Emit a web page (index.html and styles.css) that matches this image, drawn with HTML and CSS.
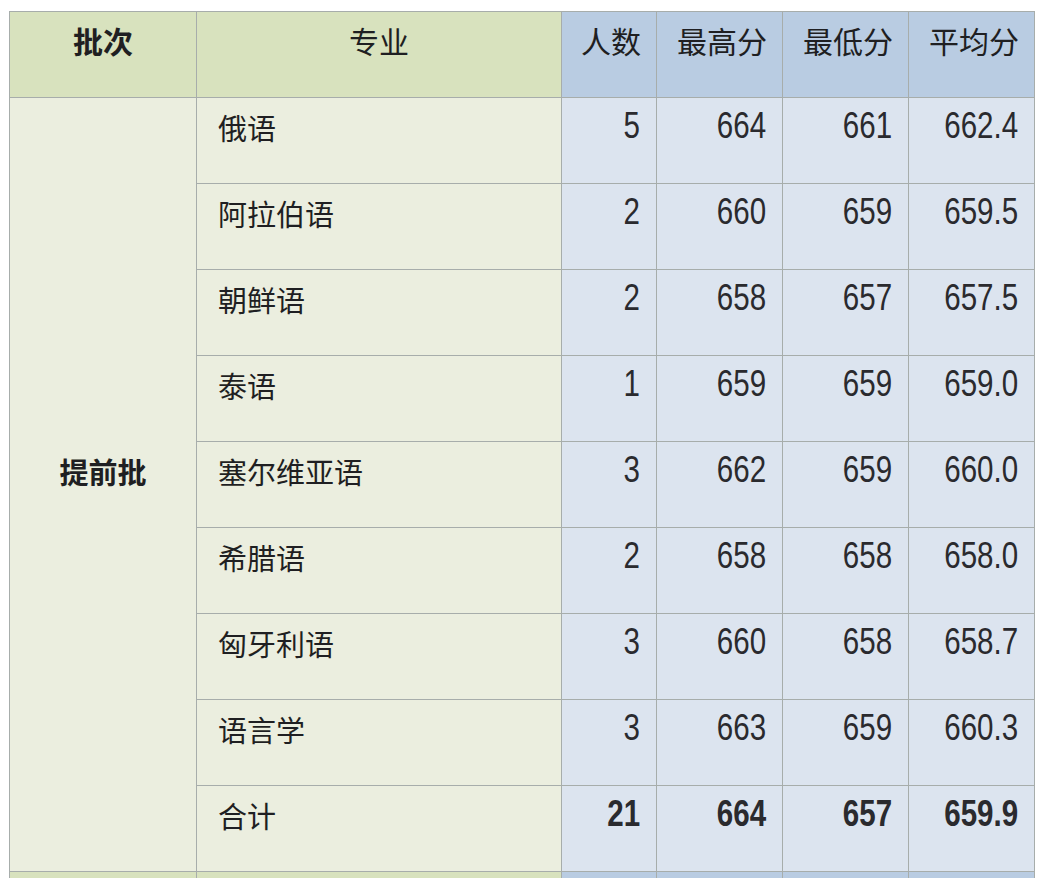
FILE: index.html
```html
<!DOCTYPE html>
<html lang="zh-CN">
<head>
<meta charset="utf-8">
<title>提前批录取分数</title>
<link rel="stylesheet" href="styles.css">
</head>
<body>
<div class="sheet" role="table">
  <div class="cell hg center bold" role="columnheader">批次</div>
  <div class="cell hg center" role="columnheader">专业</div>
  <div class="cell hb num-h" role="columnheader">人数</div>
  <div class="cell hb num-h" role="columnheader">最高分</div>
  <div class="cell hb num-h" role="columnheader">最低分</div>
  <div class="cell hb num-h" role="columnheader">平均分</div>

  <div class="cell bg batch bold" role="rowheader">提前批</div>

  <div class="cell bg name">俄语</div>
  <div class="cell bb num"><span>5</span></div><div class="cell bb num"><span>664</span></div><div class="cell bb num"><span>661</span></div><div class="cell bb num"><span>662.4</span></div>

  <div class="cell bg name">阿拉伯语</div>
  <div class="cell bb num"><span>2</span></div><div class="cell bb num"><span>660</span></div><div class="cell bb num"><span>659</span></div><div class="cell bb num"><span>659.5</span></div>

  <div class="cell bg name">朝鲜语</div>
  <div class="cell bb num"><span>2</span></div><div class="cell bb num"><span>658</span></div><div class="cell bb num"><span>657</span></div><div class="cell bb num"><span>657.5</span></div>

  <div class="cell bg name">泰语</div>
  <div class="cell bb num"><span>1</span></div><div class="cell bb num"><span>659</span></div><div class="cell bb num"><span>659</span></div><div class="cell bb num"><span>659.0</span></div>

  <div class="cell bg name">塞尔维亚语</div>
  <div class="cell bb num"><span>3</span></div><div class="cell bb num"><span>662</span></div><div class="cell bb num"><span>659</span></div><div class="cell bb num"><span>660.0</span></div>

  <div class="cell bg name">希腊语</div>
  <div class="cell bb num"><span>2</span></div><div class="cell bb num"><span>658</span></div><div class="cell bb num"><span>658</span></div><div class="cell bb num"><span>658.0</span></div>

  <div class="cell bg name">匈牙利语</div>
  <div class="cell bb num"><span>3</span></div><div class="cell bb num"><span>660</span></div><div class="cell bb num"><span>658</span></div><div class="cell bb num"><span>658.7</span></div>

  <div class="cell bg name">语言学</div>
  <div class="cell bb num"><span>3</span></div><div class="cell bb num"><span>663</span></div><div class="cell bb num"><span>659</span></div><div class="cell bb num"><span>660.3</span></div>

  <div class="cell bg name">合计</div>
  <div class="cell bb num total"><span>21</span></div><div class="cell bb num total"><span>664</span></div><div class="cell bb num total"><span>657</span></div><div class="cell bb num total"><span>659.9</span></div>

  <div class="cell hg tail"></div>
  <div class="cell hg tail"></div>
  <div class="cell hb tail"></div>
  <div class="cell hb tail"></div>
  <div class="cell hb tail"></div>
  <div class="cell hb tail"></div>
</div>
</body>
</html>
```

FILE: styles.css
```css
html, body {
  margin: 0;
  padding: 0;
  background: #ffffff;
}

body {
  padding: 11px 0 0 9px;
  font-family: "Noto Sans CJK SC", "Noto Sans", sans-serif;
  color: #1f1f22;
}

.sheet {
  display: grid;
  grid-template-columns: 187px 365px 95px 126px 126px 126px;
  grid-template-rows: repeat(10, 86px) 7px;
  width: max-content;
  border-left: 1px solid #a7adab;
  border-top: 1px solid #a7adab;
}

.cell {
  box-sizing: border-box;
  border-right: 1px solid #a7adab;
  border-bottom: 1px solid #a7adab;
  font-size: 29px;
  line-height: 34px;
  padding-top: 12px;
}

.tail { border-bottom: none; }

.hg { background: #d8e2be; }
.hb { background: #b9cce2; }
.bg { background: #ebeedf; }
.bb { background: #dce4ef; }

.center {
  text-align: center;
  font-size: 30px;
  padding-top: 11px;
}

.bold { font-weight: 700; }

.num-h {
  text-align: right;
  font-size: 30px;
  padding: 11px 15px 0 0;
}

.batch {
  grid-row: span 9;
  display: flex;
  align-items: center;
  justify-content: center;
  padding: 0 0 28px 0;
}

.name {
  padding-left: 21px;
}

.num {
  text-align: right;
  font-family: "Liberation Sans", Arial, sans-serif;
  font-size: 36px;
  padding: 11px 16px 0 0;
  color: #2a2a2e;
}

.num span {
  display: inline-block;
  transform: scaleX(0.82);
  transform-origin: right center;
}

.total { font-weight: 700; }
```
